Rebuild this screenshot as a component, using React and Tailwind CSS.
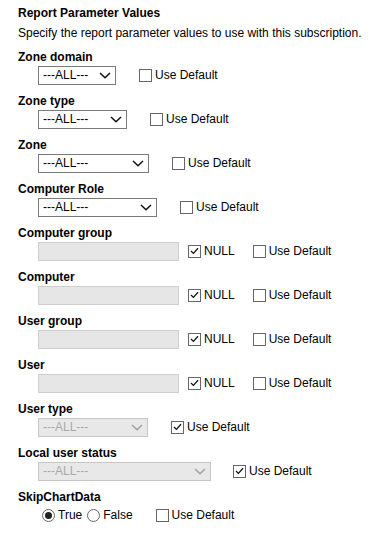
import React from 'react';

function Chevron({ disabled }) {
    return (
        <svg width="12" height="7" viewBox="0 0 12 7" className="shrink-0">
            <path
                d="M1 1 L6 5.8 L11 1"
                fill="none"
                stroke={disabled ? '#a0a0a0' : '#111'}
                strokeWidth="1.5"
            />
        </svg>
    );
}

function Select({ width, disabled }) {
    return (
        <div
            className={
                'flex items-center justify-between h-[19px] pl-[4px] pr-[4px] border ' +
                width +
                (disabled ? ' bg-[#e8e8e8] border-[#c6c6c6] text-[#a8a8a8]' : ' bg-white border-[#7a7a7a] text-black')
            }
        >
            <span className="leading-none">---ALL---</span>
            <Chevron disabled={disabled} />
        </div>
    );
}

function Checkbox({ checked }) {
    return (
        <span className="inline-flex items-center justify-center w-[13px] h-[13px] border border-[#666] bg-white shrink-0">
            {checked && (
                <svg width="9" height="8" viewBox="0 0 9 8">
                    <path d="M1 4 L3.4 6.4 L8 1.2" fill="none" stroke="#111" strokeWidth="1.3" />
                </svg>
            )}
        </span>
    );
}

function Radio({ checked }) {
    return (
        <span className="inline-flex items-center justify-center w-[13px] h-[13px] rounded-full border border-[#666] bg-white shrink-0">
            {checked && <span className="w-[7px] h-[7px] rounded-full bg-[#222]" />}
        </span>
    );
}

function UseDefault({ checked, className = '' }) {
    return (
        <label className={'flex items-center gap-[3px] ' + className}>
            <Checkbox checked={checked} />
            <span>Use Default</span>
        </label>
    );
}

function Param({ label, children }) {
    return (
        <div className="mb-[8px]">
            <div className="font-bold h-[14px] leading-[14px]">{label}</div>
            <div className="flex items-center h-[22px] pl-[20px]">{children}</div>
        </div>
    );
}

function TextRow() {
    return (
        <>
            <div className="w-[141px] h-[19px] bg-[#e6e6e6] border border-[#cfcfcf]" />
            <label className="flex items-center gap-[3px] ml-[9px]">
                <Checkbox checked />
                <span>NULL</span>
            </label>
            <UseDefault className="ml-[18px]" />
        </>
    );
}

export default function App() {
    return (
        <div className="w-[384px] h-[534px] bg-white pl-[18px] pt-[6px] text-[12px] text-black font-['Liberation_Sans',Arial,sans-serif]">
            <div className="font-bold leading-[14px]">Report Parameter Values</div>
            <div className="mt-[6px] leading-[14px]">Specify the report parameter values to use with this subscription.</div>

            <div className="mt-[10px]">
                <Param label="Zone domain">
                    <Select width="w-[78px]" />
                    <UseDefault className="ml-[23px]" />
                </Param>
                <Param label="Zone type">
                    <Select width="w-[89px]" />
                    <UseDefault className="ml-[23px]" />
                </Param>
                <Param label="Zone">
                    <Select width="w-[111px]" />
                    <UseDefault className="ml-[23px]" />
                </Param>
                <Param label="Computer Role">
                    <Select width="w-[119px]" />
                    <UseDefault className="ml-[23px]" />
                </Param>
                <Param label="Computer group">
                    <TextRow />
                </Param>
                <Param label="Computer">
                    <TextRow />
                </Param>
                <Param label="User group">
                    <TextRow />
                </Param>
                <Param label="User">
                    <TextRow />
                </Param>
                <Param label="User type">
                    <Select width="w-[110px]" disabled />
                    <UseDefault checked className="ml-[23px]" />
                </Param>
                <Param label="Local user status">
                    <Select width="w-[173px]" disabled />
                    <UseDefault checked className="ml-[22px]" />
                </Param>
                <div>
                    <div className="font-bold h-[14px] leading-[14px]">SkipChartData</div>
                    <div className="flex items-center h-[22px] pl-[24px]">
                        <label className="flex items-center gap-[3px]">
                            <Radio checked />
                            <span>True</span>
                        </label>
                        <label className="flex items-center gap-[3px] ml-[5px]">
                            <Radio />
                            <span>False</span>
                        </label>
                        <UseDefault className="ml-[23px]" />
                    </div>
                </div>
            </div>
        </div>
    );
}
